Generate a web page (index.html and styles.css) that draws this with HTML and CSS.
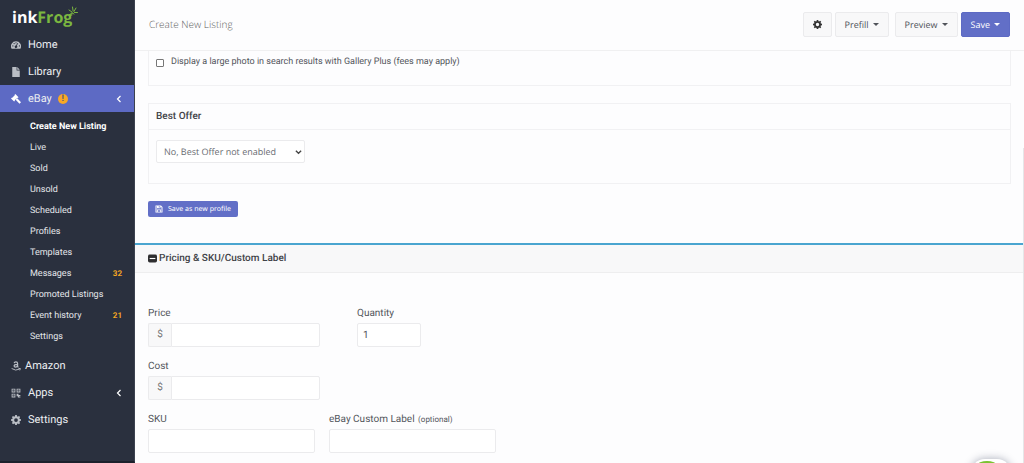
FILE: index.html
```html
<!DOCTYPE html>
<html lang="en">
<head>
  <meta charset="UTF-8" />
  <meta name="viewport" content="width=device-width, initial-scale=1" />
  <title>Create New Listing</title>
  <link rel="stylesheet" href="styles.css">
</head>
<body>
  <aside class="sidebar">
    <a class="logo" href="#">ink<span>Frog</span>
      <svg class="splash" width="10" height="10" viewBox="0 0 10 10" fill="none" stroke="#7cb740" stroke-linecap="round">
        <path d="M1 9 4 7M1 4l3 2M4.500 1l.6 4M8 2 6 5.500M9.500 6.500H6.500M4 7l2 1"/>
      </svg>
    </a>
    <nav class="nav">
      <a class="nav-item" href="#">
        <svg class="icon" viewBox="0 0 16 16"><path fill-rule="evenodd" d="M8 2a8 8 0 0 0-7 12h14A8 8 0 0 0 8 2zM3 8.500a1 1 0 1 0 0 2 1 1 0 0 0 0-2zM5 4.600a1 1 0 1 0 0 2 1 1 0 0 0 0-2zM8 3.500a1 1 0 1 0 0 2 1 1 0 0 0 0-2zM11.500 5 9.200 9.300a2 2 0 1 1-1.400-.4L10.500 4.600zM13.500 8.500a1 1 0 1 0 0 2 1 1 0 0 0 0-2z"/></svg>
        Home
      </a>
      <a class="nav-item" href="#">
        <svg class="icon" viewBox="0 0 16 16"><path d="M2 0h7v5.500h5V16H2zM10 0l4 4.500h-4z"/></svg>
        Library
      </a>
      <a class="nav-item active" href="#">
        <svg class="icon" viewBox="0 0 16 16"><path d="M7 0l5 5-1.200 1.200L10 6 6 10l.2.800L5 12 0 7l1.200-1.200.8.200 4-4-.2-.8z"/><path d="M9.500 6.500 16 13l-2.500 2.500L7.500 9z"/></svg>
        eBay
        <span class="alert">!</span>
        <svg class="chevron" viewBox="0 0 6 8"><path d="M4.500 1 1.500 4l3 3"/></svg>
      </a>
      <div class="subnav">
        <a class="current" href="#">Create New Listing</a>
        <a href="#">Live</a>
        <a href="#">Sold</a>
        <a href="#">Unsold</a>
        <a href="#">Scheduled</a>
        <a href="#">Profiles</a>
        <a href="#">Templates</a>
        <a href="#">Messages <span class="count">32</span></a>
        <a href="#">Promoted Listings</a>
        <a href="#">Event history <span class="count">21</span></a>
        <a href="#">Settings</a>
      </div>
      <a class="nav-item amazon" href="#">
        <svg class="icon" viewBox="0 0 16 16" stroke="#b9bdc4"><path fill="none" stroke-width="2" d="M5 3.500C5.500.500 10.500.500 10.500 3.500V8q0 1.500 1.500 2M10.500 5.500C7 5.500 5 6 5 8s4.500 2.500 5.500-.5"/><path fill="none" stroke-width="1.500" d="M1 12q6.500 4.500 12.500 1M12 12h3l-1 3"/></svg>
        Amazon
      </a>
      <a class="nav-item" href="#">
        <svg class="icon" viewBox="0 0 16 16"><path fill-rule="evenodd" d="M1 1h6v6H1zm1.500 1.500v3h3v-3zM9 1h6v6H9zm1.500 1.500v3h3v-3zM1 9h6v6H1zm1.500 1.500v3h3v-3zM9 9h3v2h3v2h-2v2h-2v-2H9zM13 14h2v1h-2zM3.500 3.500h1v1h-1zM11.500 3.500h1v1h-1zM3.500 11.500h1v1h-1z"/></svg>
        Apps
        <svg class="chevron" viewBox="0 0 6 8"><path d="M4.500 1 1.500 4l3 3"/></svg>
      </a>
      <a class="nav-item" href="#">
        <svg class="icon" viewBox="0 0 16 16"><path fill-rule="evenodd" d="M6.700 0h2.600l.4 2 1.300.6 1.700-1.200 1.900 1.900L13.400 5l.6 1.300 2 .4v2.600l-2 .4-.6 1.300 1.200 1.700-1.900 1.900L11 13.400l-1.300.6-.4 2H6.700l-.4-2-1.300-.6-1.700 1.200-1.900-1.900L2.600 11 2 9.700l-2-.4V6.700l2-.4L2.600 5 1.400 3.300l1.900-1.900L5 2.600 6.300 2zM8 5a3 3 0 1 0 0 6 3 3 0 0 0 0-6z"/></svg>
        Settings
      </a>
    </nav>
  </aside>

  <main class="main">
    <header class="topbar">
      <h1>Create New Listing</h1>
      <div class="actions">
        <button class="btn" aria-label="Settings">
          <svg class="gear" viewBox="0 0 16 16"><path fill-rule="evenodd" d="M6.700 0h2.600l.4 2 1.300.6 1.700-1.200 1.900 1.900L13.400 5l.6 1.300 2 .4v2.600l-2 .4-.6 1.300 1.200 1.700-1.900 1.900L11 13.400l-1.300.6-.4 2H6.700l-.4-2-1.300-.6-1.700 1.200-1.900-1.900L2.600 11 2 9.700l-2-.4V6.700l2-.4L2.600 5 1.400 3.300l1.900-1.900L5 2.600 6.300 2zM8 5a3 3 0 1 0 0 6 3 3 0 0 0 0-6z"/></svg>
        </button>
        <button class="btn">Prefill <span class="caret"></span></button>
        <button class="btn btn-preview">Preview <span class="caret"></span></button>
        <button class="btn btn-primary">Save <span class="caret"></span></button>
      </div>
    </header>

    <section class="content">
      <div class="panel panel-gallery">
        <label class="check"><input type="checkbox"> Display a large photo in search results with Gallery Plus (fees may apply)</label>
      </div>

      <div class="panel">
        <h2><label for="best-offer">Best Offer</label></h2>
        <div class="panel-body">
          <div class="select-wrap">
            <select id="best-offer">
              <option>No, Best Offer not enabled</option>
              <option>Yes, Best Offer enabled</option>
            </select>
            <svg class="select-arrow" viewBox="0 0 8 6"><path d="M1 1.500l3 3 3-3"/></svg>
          </div>
        </div>
      </div>

      <button class="btn-profile">
        <svg viewBox="0 0 16 16"><path fill-rule="evenodd" d="M1 1h11l3 3v11H1zm2 1.500V13.500h1V9h8v4.500h1V5l-2-2v3.500H4v-4zM7.500 2.500V5h2V2.500zM5.500 10.500v3h5v-3z"/></svg>
        Save as new profile
      </button>
    </section>

    <section class="pricing">
      <h2 class="section-head">
        <svg viewBox="0 0 16 16"><rect y="1" width="16" height="14" rx="3"/><path d="M3 8h10"/></svg>
        Pricing &amp; SKU/Custom Label
      </h2>
      <form class="fields">
        <div class="row row-wide">
          <div class="field">
            <label for="price">Price</label>
            <div class="money"><span>$</span><input id="price" type="text"></div>
          </div>
          <div class="field field-qty">
            <label for="qty">Quantity</label>
            <input id="qty" type="text" value="1">
          </div>
        </div>
        <div class="row">
          <div class="field">
            <label for="cost">Cost</label>
            <div class="money"><span>$</span><input id="cost" type="text"></div>
          </div>
        </div>
        <div class="row">
          <div class="field field-sku">
            <label for="sku">SKU</label>
            <input id="sku" type="text">
          </div>
          <div class="field field-sku">
            <label for="custom-label">eBay Custom Label <small>(optional)</small></label>
            <input id="custom-label" type="text">
          </div>
        </div>
      </form>
    </section>
  </main>

  <div class="scroll-thumb"></div>
  <button class="chat" aria-label="Chat">
    <svg viewBox="0 0 36 36"><circle cx="14" cy="18" r="18" fill="#7ac231"/></svg>
  </button>
</body>
</html>
```

FILE: styles.css
```css
* {
  box-sizing: border-box;
}
body {
  margin: 0;
  height: 100vh;
  display: flex;
  overflow: hidden;
  background: #fdfdfe;
  font-family: Roboto, sans-serif;
  font-size: 10px;
  color: #53565c;
  text-rendering: geometricPrecision;
}
a {
  color: inherit;
  text-decoration: none;
}
button, input, select {
  font-family: inherit;
  font-size: 10px;
  color: inherit;
  text-rendering: inherit;
}

/* sidebar */
.sidebar {
  width: 135px;
  flex-shrink: 0;
  background: #2a303e;
  border-right: 1px solid #3c424f;
  border-bottom: 2px solid #1b202b;
  color: #eceef1;
}
.logo {
  display: flex;
  height: 31px;
  padding: 6px 0 0 12px;
  font-family: "Open Sans", sans-serif;
  font-size: 16px;
  line-height: 22px;
  font-weight: bold;
  color: #fff;
}
.logo span {
  color: #7cb740;
}
.splash {
  margin-left: -4px;
}
.nav-item {
  display: flex;
  align-items: center;
  height: 27px;
  padding: 0 12px 0 11px;
  font-size: 11px;
}
.nav-item.active {
  background: #5d6ac4;
}
.icon {
  width: 10px;
  height: 10px;
  margin-right: 7px;
  fill: #b9bdc4;
}
.active .icon {
  fill: #fff;
}
.amazon .icon {
  margin-right: 4px;
}
.alert {
  width: 10px;
  height: 10px;
  margin-left: 6px;
  border-radius: 50%;
  background: #f9a825;
  color: #5f5a70;
  font-size: 9px;
  line-height: 10px;
  font-weight: bold;
  text-align: center;
}
.chevron {
  width: 6px;
  height: 8px;
  margin-left: auto;
  fill: none;
  stroke: #fff;
  stroke-width: 1.2;
}
.subnav {
  padding: 4px 12px 5px 30px;
  font-size: 9px;
  color: #e4e6ea;
}
.subnav a {
  display: flex;
  justify-content: space-between;
  align-items: center;
  height: 21px;
}
.subnav .current {
  font-weight: bold;
  color: #fff;
}
.count {
  font-size: 8px;
  font-weight: bold;
  color: #f5a623;
}

/* top bar */
.main {
  flex: 1;
  min-width: 0;
}
.topbar {
  display: flex;
  justify-content: space-between;
  align-items: center;
  height: 51px;
  padding: 0 14px 2px;
  border-bottom: 1px solid #f0f0f1;
}
.topbar h1 {
  margin: 0;
  font-family: "Open Sans", sans-serif;
  font-size: 10px;
  font-weight: 300;
  color: #606060;
}
.actions {
  display: flex;
  gap: 3px;
}
.btn {
  display: flex;
  align-items: center;
  gap: 4px;
  height: 25px;
  padding: 0 9px;
  border: 1px solid #ebebed;
  border-radius: 2px;
  background: #f8f8f9;
  color: #50535a;
  font-family: "Open Sans", sans-serif;
  font-size: 9px;
}
.btn-preview {
  margin-left: 3px;
}
.btn-primary {
  border-color: #5d6ac4;
  background: #626fc7;
  color: #fff;
}
.gear {
  width: 9px;
  height: 9px;
  fill: #333;
}
.caret {
  border: 3px solid transparent;
  border-top-color: currentColor;
  border-bottom: 0;
}

/* panels */
.content {
  padding: 0 13px 26px;
}
.panel {
  margin-bottom: 17px;
  border: 1px solid #f1f1f3;
}
.panel-gallery {
  height: 35px;
  border-top: 0;
  padding: 5px 7px;
}
.check {
  display: flex;
  align-items: center;
  gap: 7px;
  font-size: 9px;
  line-height: 13px;
}
.check input {
  appearance: none;
  width: 8px;
  height: 8px;
  margin: 0;
  border: 1px solid #777;
  border-radius: 1px;
  background: #fff;
}
.panel h2 {
  margin: 0;
  padding: 0 7px;
  border-bottom: 1px solid #f1f1f3;
  font-size: 10px;
  line-height: 25px;
  font-weight: 500;
  color: #3f4247;
}
.panel-body {
  padding: 10px 7px 20px;
}
.select-wrap {
  position: relative;
  max-width: 149px;
}
select {
  display: block;
  appearance: none;
  width: 100%;
  height: 23px;
  padding: 0 7px;
  border: 1px solid #ebebed;
  border-radius: 2px;
  background: #fff;
  font-family: "Open Sans", sans-serif;
  font-size: 9px;
  color: #6a6d73;
}
.select-arrow {
  position: absolute;
  right: 3px;
  top: 9px;
  width: 7px;
  height: 6px;
  fill: none;
  stroke: #444;
  stroke-width: 1.5;
}
.btn-profile {
  display: flex;
  align-items: center;
  gap: 5px;
  height: 16px;
  padding: 0 7px;
  border: 0;
  border-radius: 2px;
  background: #626fc7;
  color: #fff;
  font-family: "Noto Sans", sans-serif;
  font-size: 7px;
}
.btn-profile svg {
  width: 8px;
  height: 8px;
  fill: #fff;
}

/* pricing */
.pricing {
  border-top: 2px solid #4aa5d0;
}
.section-head {
  display: flex;
  align-items: center;
  gap: 2px;
  height: 28px;
  margin: 0;
  padding: 0 13px;
  border-bottom: 1px solid #eeeeef;
  background: #f8f8f9;
  font-size: 10px;
  font-weight: 500;
  color: #3f4247;
}
.section-head svg {
  width: 9px;
  height: 9px;
  fill: #2e2e30;
  stroke: #fff;
  stroke-width: 2;
}
.section-head rect {
  stroke: none;
}
.fields {
  padding: 34px 13px 0;
}
.row {
  display: flex;
  gap: 14px;
  margin-bottom: 13px;
}
.row-wide {
  gap: 37px;
}
.field {
  width: 172px;
}
.field-qty {
  width: 64px;
}
.field-sku {
  width: 167px;
}
.field label {
  display: block;
  margin-bottom: 3px;
  line-height: 13px;
  height: 13px;
}
.field small {
  margin-left: 1px;
  font-size: 8px;
}
.field input {
  display: block;
  width: 100%;
  height: 24px;
  padding: 0 5px;
  border: 1px solid #ebebed;
  border-radius: 2px;
  background: #fff;
}
.money {
  display: flex;
}
.money span {
  width: 23px;
  flex-shrink: 0;
  border: 1px solid #ebebed;
  border-right: 0;
  border-radius: 2px 0 0 2px;
  background: #f8f8f9;
  line-height: 22px;
  text-align: center;
  color: #777;
}
.money input {
  border-radius: 0 2px 2px 0;
}

.scroll-thumb {
  position: fixed;
  right: 0;
  top: 148px;
  bottom: 0;
  width: 1px;
  background: #e6e6e8;
}
.chat {
  position: fixed;
  right: 13px;
  bottom: -36px;
  width: 40px;
  height: 40px;
  padding: 2px;
  border: 0;
  border-radius: 14px;
  background: #fff;
  box-shadow: 0 0 8px rgba(40, 50, 80, 0.4);
}
.chat svg {
  display: block;
  width: 36px;
  height: 36px;
}
```
